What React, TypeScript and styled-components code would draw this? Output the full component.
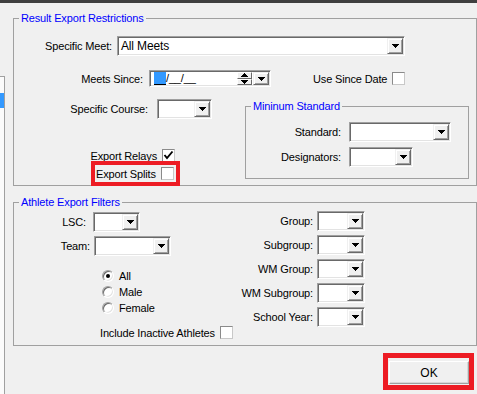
import * as React from 'react';
import styled, { createGlobalStyle } from 'styled-components';

const GlobalStyle = createGlobalStyle`
  html, body {
    margin: 0;
    padding: 0;
    background: #f0f0f0;
  }
  body {
    font-family: 'Liberation Sans', Arial, sans-serif;
    font-size: 11px;
    letter-spacing: -0.15px;
    color: #000;
  }
`;

const RED = '#ed1c24';

const Arrow = ({ up = false, w = 7, h = 4 }: { up?: boolean; w?: number; h?: number }) => (
  <svg width={w} height={h} viewBox={`0 0 ${w} ${h}`} shapeRendering="crispEdges">
    <polygon points={up ? `0,${h} ${w},${h} ${w / 2},0` : `0,0 ${w},0 ${w / 2},${h}`} fill="#000" />
  </svg>
);

const Combo = ({ width, height = 20, text }: { width: number; height?: number; text?: string }) => (
  <Styled.Sunken $w={width} $h={height}>
    <Styled.ComboText>{text}</Styled.ComboText>
    <Styled.DropButton>
      <Arrow />
    </Styled.DropButton>
  </Styled.Sunken>
);

const CheckBox = ({ checked = false }: { checked?: boolean }) => (
  <Styled.Check>
    {checked && (
      <svg width="11" height="11" viewBox="0 0 11 11">
        <polyline points="1.5,5 4,8 9.5,1.5" fill="none" stroke="#000" strokeWidth="1.9" />
      </svg>
    )}
  </Styled.Check>
);

const Radio = ({ label, checked = false }: { label: string; checked?: boolean }) => (
  <Styled.RadioRow>
    <Styled.RadioCircle>{checked && <Styled.RadioDot />}</Styled.RadioCircle>
    <span>{label}</span>
  </Styled.RadioRow>
);

const FilterRow = ({ label, width }: { label: string; width: number }) => (
  <Styled.Row $h={20}>
    <Styled.Label $w={73} $gap={4}>{label}</Styled.Label>
    <Combo width={width} />
  </Styled.Row>
);

const App = () => {
  return (
    <>
      <GlobalStyle />
      <Styled.Page>
        <Styled.TitleBar />
        <Styled.Body>
          <Styled.ListEdge>
            <Styled.ListSelection />
          </Styled.ListEdge>
          <Styled.Main>
            <Styled.GroupBox $h={168} $top={15}>
              <Styled.Legend>Result Export Restrictions</Styled.Legend>
              <Styled.Row $h={20} $top={11}>
                <Styled.Label $w={98} $gap={5}>Specific Meet:</Styled.Label>
                <Combo width={288} text="All Meets" />
              </Styled.Row>
              <Styled.Row $h={17} $top={14}>
                <Styled.Label $w={129} $gap={6}>Meets Since:</Styled.Label>
                <Styled.Sunken $w={122} $h={17}>
                  <Styled.DateText>
                    <Styled.DateSel />
                    /__/__
                  </Styled.DateText>
                  <Styled.Spinner>
                    <Styled.SpinHalf>
                      <Arrow up w={7} h={4} />
                    </Styled.SpinHalf>
                    <Styled.SpinHalf>
                      <Arrow w={7} h={4} />
                    </Styled.SpinHalf>
                  </Styled.Spinner>
                  <Styled.DropButton>
                    <Arrow />
                  </Styled.DropButton>
                </Styled.Sunken>
                <Styled.SinceCheck>
                  Use Since Date
                  <CheckBox />
                </Styled.SinceCheck>
              </Styled.Row>
              <Styled.Split>
                <Styled.LeftCol $w={231}>
                  <Styled.Row $h={20} $top={12}>
                    <Styled.Label $w={134} $gap={9}>Specific Course:</Styled.Label>
                    <Combo width={55} />
                  </Styled.Row>
                  <Styled.Row $h={13} $top={30}>
                    <Styled.Label $w={143} $gap={5}>Export Relays</Styled.Label>
                    <CheckBox checked />
                  </Styled.Row>
                  <Styled.Highlight>
                    <Styled.HighlightText>Export Splits</Styled.HighlightText>
                    <CheckBox />
                  </Styled.Highlight>
                </Styled.LeftCol>
                <Styled.GroupBox $h={73} $top={19} $w={224}>
                  <Styled.Legend>Mininum Standard</Styled.Legend>
                  <Styled.Row $h={20} $top={9}>
                    <Styled.Label $w={95} $gap={8}>Standard:</Styled.Label>
                    <Combo width={102} />
                  </Styled.Row>
                  <Styled.Row $h={20} $top={5}>
                    <Styled.Label $w={95} $gap={8}>Designators:</Styled.Label>
                    <Combo width={64} />
                  </Styled.Row>
                </Styled.GroupBox>
              </Styled.Split>
            </Styled.GroupBox>

            <Styled.GroupBox $h={144} $top={16}>
              <Styled.Legend>Athlete Export Filters</Styled.Legend>
              <Styled.Split>
                <Styled.LeftCol $w={226}>
                  <Styled.Row $h={20} $top={3}>
                    <Styled.Label $w={72} $gap={7}>LSC:</Styled.Label>
                    <Combo width={47} />
                  </Styled.Row>
                  <Styled.Row $h={20} $top={4}>
                    <Styled.Label $w={76} $gap={4}>Team:</Styled.Label>
                    <Combo width={77} />
                  </Styled.Row>
                  <Styled.RadioGroup>
                    <Radio label="All" checked />
                    <Radio label="Male" />
                    <Radio label="Female" />
                  </Styled.RadioGroup>
                  <Styled.InactiveRow>
                    Include Inactive Athletes
                    <CheckBox />
                  </Styled.InactiveRow>
                </Styled.LeftCol>
                <Styled.FilterCol>
                  <FilterRow label="Group:" width={48} />
                  <FilterRow label="Subgroup:" width={48} />
                  <FilterRow label="WM Group:" width={48} />
                  <FilterRow label="WM Subgroup:" width={48} />
                  <FilterRow label="School Year:" width={48} />
                </Styled.FilterCol>
              </Styled.Split>
            </Styled.GroupBox>

            <Styled.OkRow>
              <Styled.OkHighlight>
                <Styled.OkButton>OK</Styled.OkButton>
              </Styled.OkHighlight>
            </Styled.OkRow>
          </Styled.Main>
        </Styled.Body>
      </Styled.Page>
    </>
  );
};

const Styled = {
  Page: styled.div`
    width: 477px;
    height: 394px;
    display: flex;
    flex-direction: column;
    background: #f0f0f0;
    overflow: hidden;
  `,
  TitleBar: styled.div`
    height: 3px;
    background: #3f3f3f;
    flex-shrink: 0;
  `,
  Body: styled.div`
    display: flex;
    flex: 1;
  `,
  ListEdge: styled.div`
    box-sizing: border-box;
    width: 5px;
    margin-top: 73px;
    background: #fbfbfb;
    border-top: 1px solid #a0a0a0;
    border-right: 1px solid #a0a0a0;
    flex-shrink: 0;
  `,
  ListSelection: styled.div`
    margin-top: 16px;
    height: 15px;
    background: #3399ff;
  `,
  Main: styled.div`
    display: flex;
    flex-direction: column;
    padding-left: 8px;
  `,
  GroupBox: styled.div<{ $h: number; $top: number; $w?: number }>`
    box-sizing: border-box;
    width: ${(p) => p.$w ?? 464}px;
    height: ${(p) => p.$h}px;
    margin-top: ${(p) => p.$top}px;
    border: 1px solid #a0a0a0;
    display: flex;
    flex-direction: column;
    flex-shrink: 0;
  `,
  Legend: styled.div`
    align-self: flex-start;
    margin: -8px 0 0 5px;
    padding: 0 2px;
    height: 14px;
    line-height: 14px;
    background: #f0f0f0;
    color: #0000ff;
  `,
  Row: styled.div<{ $h: number; $top?: number }>`
    display: flex;
    align-items: center;
    height: ${(p) => p.$h}px;
    margin-top: ${(p) => p.$top ?? 0}px;
    flex-shrink: 0;
  `,
  Label: styled.span<{ $w: number; $gap: number }>`
    width: ${(p) => p.$w}px;
    margin-right: ${(p) => p.$gap}px;
    text-align: right;
    white-space: nowrap;
    flex-shrink: 0;
  `,
  Sunken: styled.div<{ $w: number; $h: number }>`
    box-sizing: border-box;
    display: flex;
    width: ${(p) => p.$w}px;
    height: ${(p) => p.$h}px;
    padding: 1px;
    background: #fff;
    border: 1px solid;
    border-color: #a0a0a0 #ffffff #ffffff #a0a0a0;
    box-shadow: inset 1px 1px 0 #696969, inset -1px -1px 0 #e3e3e3;
    flex-shrink: 0;
  `,
  ComboText: styled.div`
    flex: 1;
    padding-left: 2px;
    display: flex;
    align-items: center;
    font-size: 12px;
    white-space: nowrap;
  `,
  DropButton: styled.div`
    box-sizing: border-box;
    width: 16px;
    display: flex;
    align-items: center;
    justify-content: center;
    background: #f0f0f0;
    border: 1px solid;
    border-color: #f0f0f0 #696969 #696969 #f0f0f0;
    box-shadow: inset 1px 1px 0 #ffffff, inset -1px -1px 0 #a0a0a0;
  `,
  DateText: styled.div`
    flex: 1;
    display: flex;
    align-items: flex-end;
    padding-left: 3px;
    line-height: 13px;
    font-size: 11px;
    white-space: nowrap;
  `,
  DateSel: styled.span`
    display: inline-block;
    width: 12px;
    height: 13px;
    background: #3399ff;
    border-bottom: 1px solid #000;
    box-sizing: border-box;
  `,
  Spinner: styled.div`
    width: 15px;
    display: flex;
    flex-direction: column;
    margin-right: 1px;
  `,
  SpinHalf: styled.div`
    box-sizing: border-box;
    flex: 1;
    display: flex;
    align-items: center;
    justify-content: center;
    background: #f0f0f0;
    border: 1px solid;
    border-color: #ffffff #696969 #696969 #ffffff;
  `,
  SinceCheck: styled.label`
    display: flex;
    align-items: center;
    gap: 5px;
    margin-left: 42px;
    white-space: nowrap;
  `,
  Check: styled.span`
    box-sizing: border-box;
    width: 13px;
    height: 13px;
    display: inline-flex;
    align-items: center;
    justify-content: center;
    background: #fff;
    border: 1px solid;
    border-color: #8a8a8a #c8c8c8 #c8c8c8 #8a8a8a;
    flex-shrink: 0;
  `,
  Split: styled.div`
    display: flex;
    align-items: flex-start;
  `,
  LeftCol: styled.div<{ $w: number }>`
    width: ${(p) => p.$w}px;
    display: flex;
    flex-direction: column;
    flex-shrink: 0;
  `,
  Highlight: styled.div`
    align-self: flex-start;
    display: flex;
    align-items: center;
    margin: -1px 0 0 77px;
    padding: 2px 2px 2px 1px;
    border: 4px solid ${RED};
  `,
  HighlightText: styled.span`
    width: 65px;
    white-space: nowrap;
  `,
  RadioGroup: styled.div`
    display: flex;
    flex-direction: column;
    margin: 12px 0 0 88px;
  `,
  RadioRow: styled.div`
    display: flex;
    align-items: center;
    gap: 5px;
    height: 16px;
  `,
  RadioCircle: styled.span`
    box-sizing: border-box;
    width: 12px;
    height: 12px;
    border-radius: 50%;
    background: #fff;
    border: 1px solid;
    border-color: #a0a0a0 #ffffff #ffffff #a0a0a0;
    box-shadow: inset 1px 1px 0 #696969, inset -1px -1px 0 #e3e3e3;
    display: flex;
    align-items: center;
    justify-content: center;
  `,
  RadioDot: styled.span`
    width: 4px;
    height: 4px;
    border-radius: 50%;
    background: #000;
  `,
  InactiveRow: styled.label`
    display: flex;
    align-items: center;
    gap: 5px;
    height: 13px;
    margin: 10px 0 0 86px;
    white-space: nowrap;
  `,
  FilterCol: styled.div`
    display: flex;
    flex-direction: column;
    gap: 4px;
    margin-top: 2px;
  `,
  OkRow: styled.div`
    width: 464px;
    display: flex;
    justify-content: flex-end;
    padding-right: 3px;
    box-sizing: border-box;
    margin-top: 7px;
  `,
  OkHighlight: styled.div`
    box-sizing: border-box;
    width: 91px;
    height: 37px;
    border: 5px solid ${RED};
    padding: 3px 0 0 1px;
  `,
  OkButton: styled.button`
    box-sizing: border-box;
    width: 80px;
    height: 23px;
    padding: 0;
    font-family: 'Liberation Sans', Arial, sans-serif;
    font-size: 12px;
    color: #000;
    background: #f0f0f0;
    border: 1px solid;
    border-color: #ffffff #a0a0a0 #a0a0a0 #ffffff;
    box-shadow: inset -1px -1px 0 #d8d8d8;
  `,
};

export default App;
